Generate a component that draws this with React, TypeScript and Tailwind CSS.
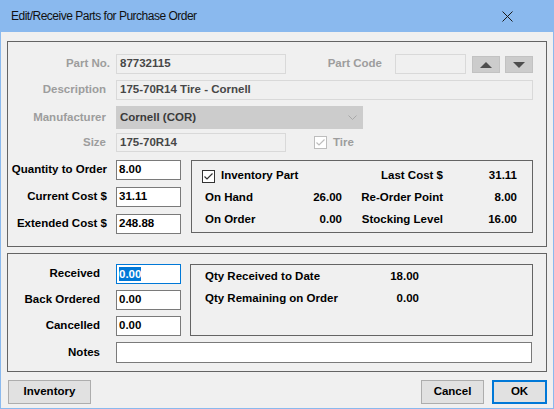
import React from 'react'

const dis = 'text-[#9D9D9D]'

function Check({ disabled }: { disabled?: boolean }) {
  const c = disabled ? '#BDBDBD' : '#333333'
  return (
    <span
      className={`w-[13px] h-[13px] border bg-white flex items-center justify-center shrink-0 ${
        disabled ? 'border-[#BDBDBD] bg-[#F0F0F0]' : 'border-[#333333]'
      }`}
    >
      <svg width="11" height="11" viewBox="0 0 11 11">
        <path d="M1.5 5.5 L4 8 L9.5 2.5" fill="none" stroke={c} strokeWidth="1.2" />
      </svg>
    </span>
  )
}

function Box({ value, w, h = 20, focused }: { value?: string; w: number; h?: number; focused?: boolean }) {
  return (
    <div
      style={{ width: w, height: h }}
      className={`bg-white border flex items-center pl-[2px] text-black ${
        focused ? 'border-[#0078D7]' : 'border-[#7A7A7A]'
      }`}
    >
      {focused ? <span className="bg-[#0078D7] text-white leading-[14px]">{value}</span> : value}
    </div>
  )
}

function DisBox({ value, w, h = 20 }: { value?: string; w: number; h?: number }) {
  return (
    <div
      style={{ width: w, height: h }}
      className="border border-[#D9D9D9] flex items-center pl-[3px] text-[#474747]"
    >
      {value}
    </div>
  )
}

function Arrow({ up }: { up?: boolean }) {
  return (
    <div className="w-[28px] h-[17px] bg-[#CCCCCC] border border-[#C2C2C2] flex items-center justify-center mt-[2px]">
      <svg width="14" height="8" viewBox="0 0 14 8">
        <path d={up ? 'M1 7 L7 1 L13 7 Z' : 'M1 1 L13 1 L7 7 Z'} fill="#4D4D4D" />
      </svg>
    </div>
  )
}

export default function App() {
  return (
    <div className="w-[554px] h-[409px] bg-[#8AB9EE] flex flex-col font-['Liberation_Sans',Arial,sans-serif] text-[11.5px] font-bold text-black overflow-hidden">
      {/* title bar */}
      <div className="h-[32px] flex items-center justify-between shrink-0">
        <span className="pl-[11px] text-[12px] font-normal tracking-[-0.5px] text-[#111]">
          Edit/Receive Parts for Purchase Order
        </span>
        <svg width="11" height="11" viewBox="0 0 11 11" className="mr-[41px]">
          <path d="M0.5 0.5 L10.5 10.5 M10.5 0.5 L0.5 10.5" stroke="#1a1a1a" strokeWidth="1" />
        </svg>
      </div>

      <div className="flex-1 mx-[1px] mb-[1px] bg-[#F0F0F0] pt-[9px] px-[6px] flex flex-col">
        {/* part details */}
        <div className="border border-[#646464] h-[206px] flex flex-col">
          <div className="flex items-center h-[20px] mt-[12px]">
            <span className={`w-[102px] text-right ${dis}`}>Part No.</span>
            <div className="ml-[6px]">
              <DisBox value="87732115" w={170} />
            </div>
            <span className={`w-[96px] text-right ${dis}`}>Part Code</span>
            <div className="ml-[13px]">
              <DisBox w={71} />
            </div>
            <div className="ml-[6px] flex gap-[5px] self-start">
              <Arrow up />
              <Arrow />
            </div>
          </div>

          <div className="flex items-center h-[20px] mt-[6px]">
            <span className={`w-[98px] text-right ${dis}`}>Description</span>
            <div className="ml-[10px]">
              <DisBox value="175-70R14 Tire - Cornell" w={417} />
            </div>
          </div>

          <div className="flex items-center h-[23px] mt-[6px]">
            <span className={`w-[98px] text-right ${dis}`}>Manufacturer</span>
            <div className="ml-[10px] w-[247px] h-[23px] bg-[#CCCCCC] flex items-center justify-between pl-[4px] pr-[6px] text-[#3A3A3A]">
              Cornell (COR)
              <svg width="9" height="5" viewBox="0 0 9 5">
                <path d="M0.5 0.5 L4.5 4.5 L8.5 0.5" fill="none" stroke="#A8A8A8" strokeWidth="1" />
              </svg>
            </div>
          </div>

          <div className="flex items-center h-[19px] mt-[4px]">
            <span className={`w-[98px] text-right ${dis}`}>Size</span>
            <div className="ml-[10px]">
              <DisBox value="175-70R14" w={170} h={19} />
            </div>
            <div className="ml-[28px] flex items-center gap-[6px]">
              <Check disabled />
              <span className={dis}>Tire</span>
            </div>
          </div>

          <div className="flex mt-[8px]">
            <div className="flex flex-col gap-[7px]">
              {[
                ['Quantity to Order', '8.00'],
                ['Current Cost $', '31.11'],
                ['Extended Cost $', '248.88'],
              ].map(([l, v]) => (
                <div key={l} className="flex items-center h-[20px]">
                  <span className="w-[99px] text-right whitespace-nowrap">{l}</span>
                  <div className="ml-[9px]">
                    <Box value={v} w={65} />
                  </div>
                </div>
              ))}
            </div>

            <div className="ml-[10px] w-[342px] h-[73px] border border-[#646464] pt-[4px] pl-[13px] flex flex-col">
              <div className="flex items-center h-[22px]">
                <div className="w-[137px] flex items-center gap-[6px] -ml-[3px]">
                  <Check />
                  <span>Inventory Part</span>
                </div>
                <span className="w-[104px] text-right">Last Cost $</span>
                <span className="w-[74px] text-right">31.11</span>
              </div>
              <div className="flex items-center h-[22px]">
                <span className="w-[90px]">On Hand</span>
                <span className="w-[47px] text-right">26.00</span>
                <span className="w-[101px] text-right">Re-Order Point</span>
                <span className="w-[74px] text-right">8.00</span>
              </div>
              <div className="flex items-center h-[22px]">
                <span className="w-[90px]">On Order</span>
                <span className="w-[47px] text-right">0.00</span>
                <span className="w-[101px] text-right">Stocking Level</span>
                <span className="w-[74px] text-right">16.00</span>
              </div>
            </div>
          </div>
        </div>

        {/* receiving */}
        <div className="border border-[#646464] h-[119px] mt-[6px] flex flex-col">
          <div className="flex mt-[10px]">
            <div className="flex flex-col gap-[6px]">
              {[
                ['Received', '0.00'],
                ['Back Ordered', '0.00'],
                ['Cancelled', '0.00'],
              ].map(([l, v], i) => (
                <div key={l} className="flex items-center h-[20px]">
                  <span className="w-[92px] text-right">{l}</span>
                  <div className="ml-[16px]">
                    <Box value={v} w={65} focused={i === 0} />
                  </div>
                </div>
              ))}
            </div>
            <div className="ml-[9px] w-[343px] h-[72px] border border-[#646464] pt-[1px] pl-[14px] flex flex-col">
              <div className="flex items-center h-[22px]">
                <span className="w-[150px]">Qty Received to Date</span>
                <span className="w-[64px] text-right">18.00</span>
              </div>
              <div className="flex items-center h-[22px]">
                <span className="w-[150px]">Qty Remaining on Order</span>
                <span className="w-[64px] text-right">0.00</span>
              </div>
            </div>
          </div>
          <div className="flex items-center h-[21px] mt-[6px]">
            <span className="w-[92px] text-right">Notes</span>
            <div className="ml-[16px]">
              <Box w={416} h={21} />
            </div>
          </div>
        </div>

        {/* buttons */}
        <div className="flex justify-between mt-[8px]">
          <button className="ml-[1px] w-[83px] h-[24px] bg-[#E1E1E1] border border-[#ADADAD] font-bold">
            Inventory
          </button>
          <div className="flex gap-[8px]">
            <button className="w-[63px] h-[24px] bg-[#E1E1E1] border border-[#ADADAD] font-bold">
              Cancel
            </button>
            <button className="w-[55px] h-[24px] bg-[#E1E1E1] border-2 border-[#0078D7] font-bold">
              OK
            </button>
          </div>
        </div>
      </div>
    </div>
  )
}
